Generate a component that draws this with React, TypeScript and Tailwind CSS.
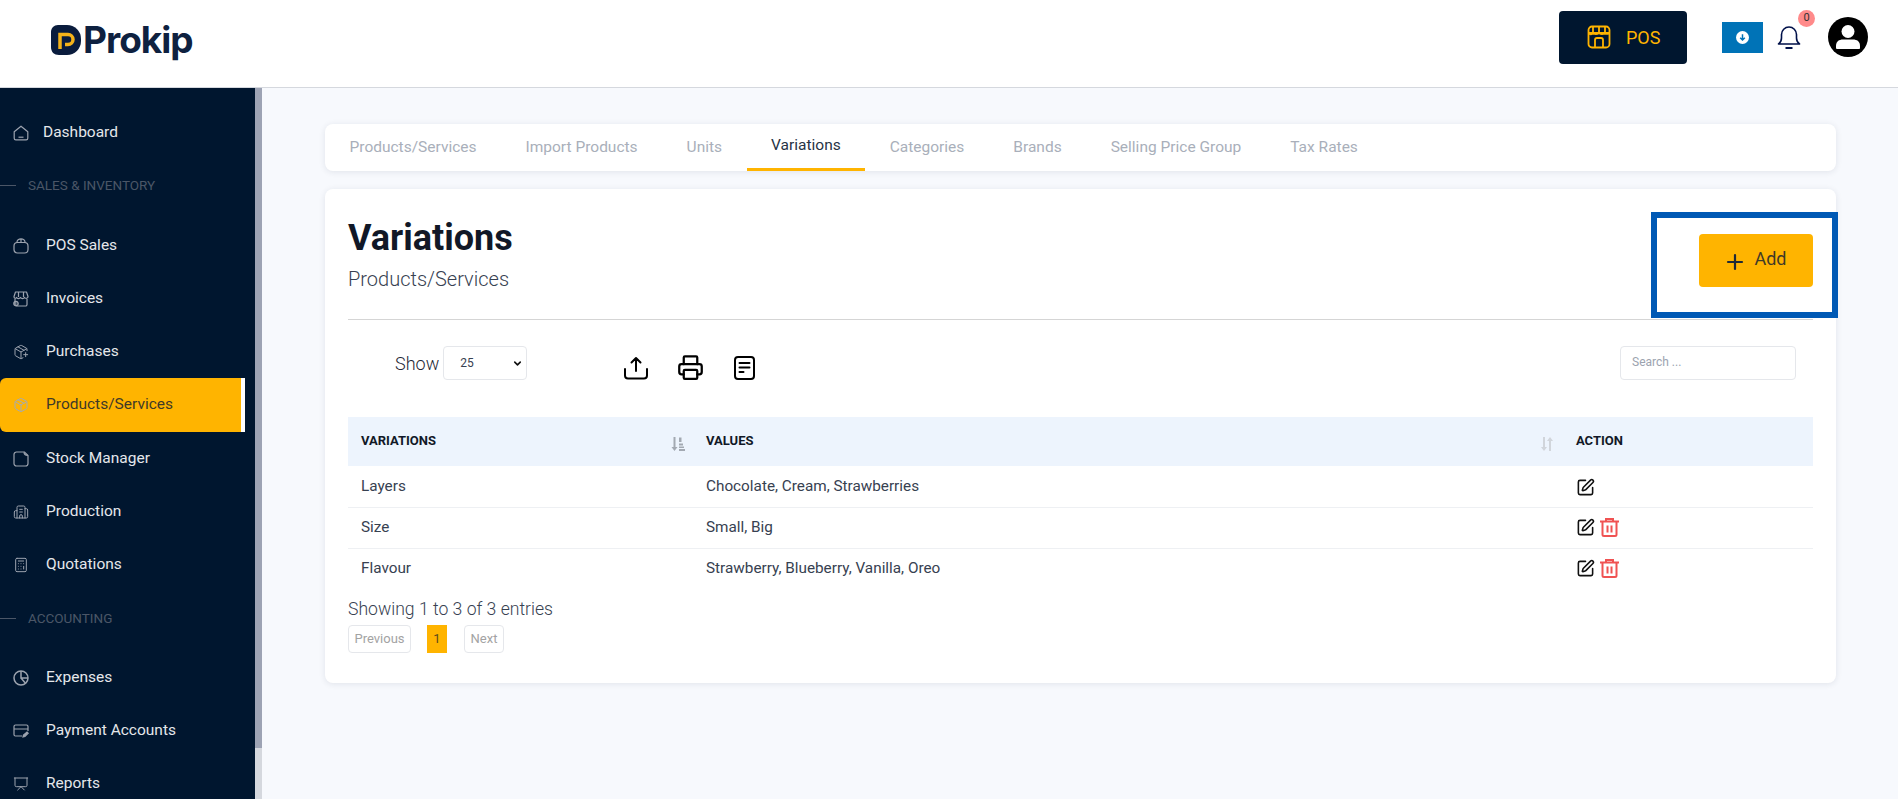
import {
  Building2,
  Calculator,
  ChevronDown,
  Package,
  PackagePlus,
  Plus,
  Presentation,
  Printer,
  SquarePen,
} from "lucide-react";
import type { ReactNode } from "react";

type IconProps = { className?: string; strokeWidth?: number };

const HomeIcon = ({ className }: IconProps) => (
  <svg viewBox="0 0 16 16" fill="none" stroke="currentColor" strokeWidth="1.2" className={className}>
    <path d="M1.2 6.8 8 1.2l6.8 5.6v6.4c0 1-.7 1.6-1.6 1.6H2.8c-.9 0-1.6-.6-1.6-1.6z" strokeLinejoin="round" />
    <path d="M5.5 12.2h5" />
  </svg>
);

const BagIcon = ({ className }: IconProps) => (
  <svg viewBox="0 0 16 16" fill="none" stroke="currentColor" strokeWidth="1.2" className={className}>
    <rect x="1" y="4.5" width="14" height="10.5" rx="3.5" />
    <path d="M4 5V4a4 3.2 0 0 1 8 0v1M8 1v3.5" />
  </svg>
);

const StoreIcon = ({ className }: IconProps) => (
  <svg viewBox="0 0 16 16" fill="none" stroke="currentColor" strokeWidth="1.2" className={className}>
    <path d="M2.5 1h11l1.5 4.5c0 2-2.4 2.4-3.5 1-1 1.4-3 1.4-4 0-1 1.4-3.2 1.4-4 0-1.100 1.400-2.500 1-2.500-1z" strokeLinejoin="round" />
    <path d="M2 8v5.500A1.500 1.500 0 0 0 3.500 15h9a1.500 1.500 0 0 0 1.500-1.500V8M5.500 1v5M10.500 1v5" />
    <circle cx="3" cy="12.500" r="2.200" fill="currentColor" fillOpacity="0.4" />
  </svg>
);

const NoteIcon = ({ className }: IconProps) => (
  <svg viewBox="0 0 16 16" fill="none" stroke="currentColor" strokeWidth="1.2" className={className}>
    <path d="M3.500 1h8l3.500 3.500V12.500a2.500 2.500 0 0 1-2.500 2.500h-9A2.500 2.500 0 0 1 1 12.500v-9A2.500 2.500 0 0 1 3.500 1z" />
    <path d="M11 1.200c0 1.800.8 3 3.800 3.200" />
  </svg>
);

const PieIcon = ({ className }: IconProps) => (
  <svg viewBox="0 0 16 16" fill="none" stroke="currentColor" strokeWidth="1.500" className={className}>
    <circle cx="8" cy="8" r="7" />
    <path d="M8 1v7h7M8 8l4.500 5.200" />
  </svg>
);

const CardPenIcon = ({ className }: IconProps) => (
  <svg viewBox="0 0 16 16" fill="none" stroke="currentColor" strokeWidth="1.200" className={className}>
    <path d="M9 13H2.500A1.500 1.500 0 0 1 1 11.500v-8A1.500 1.500 0 0 1 2.500 2h11A1.500 1.500 0 0 1 15 3.500V8M1 6h14" />
    <path d="m10 14 .5-2 3.500-3 1.200 1.300-3.300 3.200z" fill="currentColor" />
  </svg>
);

const NAV_TOP = [
  { label: "POS Sales", icon: BagIcon },
  { label: "Invoices", icon: StoreIcon },
  { label: "Purchases", icon: PackagePlus },
  { label: "Products/Services", icon: Package, active: true },
  { label: "Stock Manager", icon: NoteIcon },
  { label: "Production", icon: Building2 },
  { label: "Quotations", icon: Calculator },
];

const NAV_ACCOUNTING = [
  { label: "Expenses", icon: PieIcon },
  { label: "Payment Accounts", icon: CardPenIcon },
  { label: "Reports", icon: Presentation },
];

const TABS = [
  "Products/Services",
  "Import Products",
  "Units",
  "Variations",
  "Categories",
  "Brands",
  "Selling Price Group",
  "Tax Rates",
];

const ROWS = [
  { name: "Layers", values: "Chocolate, Cream, Strawberries", canDelete: false },
  { name: "Size", values: "Small, Big", canDelete: true },
  { name: "Flavour", values: "Strawberry, Blueberry, Vanilla, Oreo", canDelete: true },
];

const NavItem = ({
  label,
  icon: Icon,
  active,
}: {
  label: string;
  icon: (props: IconProps) => ReactNode;
  active?: boolean;
}) => (
  <div
    className={
      active
        ? "flex h-[54px] w-[245px] shrink-0 items-center rounded-l-md border-r-[4px] border-white bg-[#ffb400] pl-[13px] text-[#3f3a28]"
        : "flex h-[53px] shrink-0 items-center pl-[13px] text-[#e5e7eb]"
    }
  >
    <Icon strokeWidth={1.5} className={active ? "h-4 w-4 text-[#a6abb0]" : "h-4 w-4 text-[#9ca3af]"} />
    <span className="ml-[17px] text-[15.500px]">{label}</span>
  </div>
);

const SectionLabel = ({ label }: { label: string }) => (
  <div className="flex h-[30px] items-center gap-[12px] text-[13.500px] text-[#4b5667]">
    <div className="h-px w-4 bg-[#4b5667]" />
    <span>{label}</span>
  </div>
);

const Sidebar = () => (
  <div className="flex w-[262px] shrink-0 overflow-hidden">
    <aside className="flex w-[255px] flex-col overflow-hidden bg-[#00162f] pt-[18px]">
      <div className="flex h-[53px] shrink-0 items-center pl-[13px] text-[#e5e7eb]">
        <HomeIcon className="h-4 w-4 text-[#9ca3af]" />
        <span className="ml-[14px] text-[15.500px]">Dashboard</span>
      </div>
      <div className="mt-[11px]">
        <SectionLabel label="SALES & INVENTORY" />
      </div>
      <div className="mt-[19px] flex flex-col">
        {NAV_TOP.map((item) => (
          <NavItem key={item.label} {...item} />
        ))}
      </div>
      <div className="mt-[12px]">
        <SectionLabel label="ACCOUNTING" />
      </div>
      <div className="mt-[18px] flex flex-col">
        {NAV_ACCOUNTING.map((item) => (
          <NavItem key={item.label} {...item} />
        ))}
      </div>
    </aside>
    <div className="flex w-[7px] flex-col bg-[#d5d8de]">
      <div className="h-[660px] bg-[#9da3b4]" />
    </div>
  </div>
);

const Header = () => (
  <header className="flex h-[88px] shrink-0 items-center justify-between border-b border-[#d5d8de] bg-white pr-[30px] pb-[13px] pl-[51px]">
    <div className="mt-[5px] flex items-center gap-[2px]">
      <svg viewBox="0 0 30 30" className="h-[30px] w-[30px]">
        <path d="M7 0h9a14 14 0 0 1 14 14v2a14 14 0 0 1-14 14H8c-5 0-8-3-8-8V7c0-4 3-7 7-7z" fill="#0a1c3d" />
        <path d="M9 24V9.500h8a5 5 0 0 1 0 10h-3" fill="none" stroke="#f5b31a" strokeWidth="3.500" />
      </svg>
      <span className="font-['Inter',sans-serif] text-[37px] leading-none font-bold tracking-[-1px] text-[#0e2140]">
        Prokip
      </span>
    </div>
    <div className="flex items-center">
      <button className="flex h-[53px] w-[128px] items-center rounded bg-[#00162f] pl-[28px] text-[18px] text-[#ffb400]">
        <svg viewBox="0 0 24 24" fill="none" stroke="currentColor" strokeWidth="1.800" className="h-6 w-6">
          <rect x="1.500" y="1.500" width="21" height="21" rx="3.500" />
          <path d="M2 8h20M6 2v5.500c0 2-4 2.500-4 .5M12 2v5.500c0 2-6 2-6 0M18 2v5.500c0 2-6 2-6 0M18 7.500c0 2 4 1.500 4 .5M8 22v-7a2 2 0 0 1 2-2h4a2 2 0 0 1 2 2v7" />
        </svg>
        <span className="ml-[15px]">POS</span>
      </button>
      <div className="ml-[35px] flex h-[31px] w-[41px] items-center justify-center bg-[#0073b7]">
        <svg viewBox="0 0 14 14" className="h-[13px] w-[13px]">
          <circle cx="7" cy="7" r="7" fill="#fff" />
          <path d="M7 3.500v6M4.500 7.200 7 9.700l2.500-2.500" fill="none" stroke="#0073b7" strokeWidth="1.600" />
        </svg>
      </div>
      <div className="relative ml-[14px] h-6 w-6">
        <svg viewBox="0 0 24 24" fill="none" stroke="#00114a" strokeWidth="1.600" className="h-6 w-6">
          <path d="M1.500 19c2-1.500 3-3 3-6V9.500a7.500 7.500 0 0 1 15 0V13c0 3 1 4.500 3 6z" strokeLinejoin="round" />
          <path d="M8.500 23h7" strokeWidth="2" />
        </svg>
        <span className="absolute -top-[15px] left-[21px] flex h-[17px] w-[17px] items-center justify-center rounded-full bg-[#ff8a8a] text-[11px] text-[#333]">
          0
        </span>
      </div>
      <svg viewBox="0 0 40 40" className="ml-[27px] h-10 w-10">
        <circle cx="20" cy="20" r="20" fill="#000" />
        <circle cx="20" cy="14.500" r="6.500" fill="#fff" />
        <path d="M8 31v-2c0-4.500 3-6.500 7-6.500h10c4 0 7 2 7 6.500v2c0 .8-.5 1-1.500 1h-21c-1 0-1.500-.2-1.500-1z" fill="#fff" />
      </svg>
    </div>
  </header>
);

const SortDownIcon = () => (
  <svg viewBox="0 0 14 16" className="h-4 w-[14px] text-[#a3a9b2]" fill="currentColor">
    <path d="M2.500 1h2v10h2L3.500 15 .5 11h2z" />
    <path d="M8 1.500h2.500V6H8zM8 7.500h4v2H8zM8 10.500h5v1.500H8zM8 13h6v2H8z" />
  </svg>
);

const SortBothIcon = () => (
  <svg viewBox="0 0 14 16" className="h-4 w-[14px] text-[#d1d5db]" fill="currentColor">
    <path d="M3 1h2v10h2l-3 4-3-4h2zM9 15h2V5h2l-3-4-3 4h2z" />
  </svg>
);

const TrashIcon = () => (
  <svg viewBox="0 0 19 19" fill="none" stroke="#f05252" strokeWidth="2" className="h-[19px] w-[19px]">
    <path d="M0 3.500h19M6 3.500V1h7v2.500M2.500 3.500V16.500A1.500 1.500 0 0 0 4 18h11a1.500 1.500 0 0 0 1.500-1.500V3.500M7.500 7.500v7M11.500 7.500v7" />
  </svg>
);

const Toolbar = () => (
  <div className="mt-[26px] flex h-[36px] items-start justify-between pr-[17px] pl-[47px]">
    <div className="flex items-start">
      <label className="flex items-center gap-1 text-[18px] font-light text-[#1f2937]">
        Show
        <div className="relative">
          <select className="h-[34px] w-[84px] appearance-none rounded border border-[#e5e7eb] bg-white pl-4 text-[12px] font-normal text-[#374151] outline-none">
            <option>25</option>
          </select>
          <ChevronDown strokeWidth={3.500} className="absolute top-[12px] right-[4px] h-[11px] w-[11px] text-[#111]" />
        </div>
      </label>
      <div className="mt-[8px] ml-[97px] flex items-center text-black">
        <svg viewBox="0 0 24 24" fill="none" stroke="currentColor" strokeWidth="2" strokeLinecap="round" className="h-6 w-6">
          <path d="M12 15V2M7.500 6.500 12 2l4.500 4.500M1 13v6.500A3 3 0 0 0 4 22.500h16a3 3 0 0 0 3-3V13" strokeLinejoin="round" />
        </svg>
        <Printer strokeWidth={2} className="ml-[29px] h-[27px] w-[27px]" />
        <svg viewBox="0 0 21 24" fill="none" stroke="currentColor" strokeWidth="2" strokeLinecap="round" className="ml-[30px] h-6 w-[21px]">
          <rect x="1" y="1" width="19" height="22" rx="3" />
          <path d="M5.500 7h10M5.500 11.500h10M5.500 16h4" />
        </svg>
      </div>
    </div>
    <input
      placeholder="Search ..."
      className="h-[34px] w-[176px] rounded border border-[#e5e7eb] bg-white pb-[2px] pl-[11px] text-[12px] outline-none placeholder:text-[#9ca3af]"
    />
  </div>
);

const VariationsTable = () => (
  <table className="mt-[35px] w-full table-fixed border-collapse text-[15.300px] text-[#374151]">
    <colgroup>
      <col className="w-[345px]" />
      <col className="w-[870px]" />
      <col />
    </colgroup>
    <thead>
      <tr className="h-[49px] bg-[#edf4fd] text-left text-[13px] font-bold text-[#111827]">
        <th className="pb-[2px] pl-[13px]">
          <div className="flex items-center justify-between pr-2">
            VARIATIONS
            <span className="mt-[7px]">
              <SortDownIcon />
            </span>
          </div>
        </th>
        <th className="pb-[2px] pl-[13px]">
          <div className="flex items-center justify-between pr-[9px]">
            VALUES
            <span className="mt-[7px]">
              <SortBothIcon />
            </span>
          </div>
        </th>
        <th className="pb-[2px] pl-[13px]">ACTION</th>
      </tr>
    </thead>
    <tbody>
      {ROWS.map((row, i) => (
        <tr key={row.name} className={i < 2 ? "h-[41px] border-b border-[#eef0f3]" : "h-[41px]"}>
          <td className="pl-[13px]">{row.name}</td>
          <td className="pl-[13px]">{row.values}</td>
          <td className="pl-[13px]">
            <div className={i === 0 ? "mt-[3px] flex items-center gap-[5px]" : "flex items-center gap-[5px]"}>
              <SquarePen strokeWidth={2} className="h-[19px] w-[19px] text-[#111]" />
              {row.canDelete && <TrashIcon />}
            </div>
          </td>
        </tr>
      ))}
    </tbody>
  </table>
);

const Pagination = () => (
  <div className="mt-[3px] flex h-[28px] items-stretch text-[13px] text-[#a3a3a3]">
    <button className="w-[63px] rounded-sm border border-[#e5e7eb]">Previous</button>
    <button className="ml-4 w-[20px] bg-[#ffb400] text-[#5a4a1c]">1</button>
    <button className="ml-[17px] w-[40px] rounded-sm border border-[#e5e7eb]">Next</button>
  </div>
);

const App = () => {
  return (
    <div className="flex h-[799px] flex-col overflow-hidden bg-[#f7f9fd] font-['Roboto',sans-serif]">
      <Header />
      <div className="flex min-h-0 flex-1">
        <Sidebar />
        <main className="w-[1636px] shrink-0 pt-[36px] pr-[62px] pl-[63px]">
          <nav className="flex h-[47px] rounded-lg bg-white text-[15.500px] text-[#a9afba] shadow-[0_1px_6px_rgba(30,40,70,0.1)]">
            {TABS.map((tab) =>
              tab === "Variations" ? (
                <div key={tab} className="flex items-center border-b-[3px] border-[#ffb400] px-[24.500px] text-[#263345]">
                  {tab}
                </div>
              ) : (
                <div key={tab} className="flex items-center px-[24.500px]">
                  {tab}
                </div>
              ),
            )}
          </nav>
          <section className="relative mt-[18px] h-[494px] rounded-lg bg-white px-[23px] shadow-[0_1px_6px_rgba(30,40,70,0.1)]">
            <div className="flex h-[131px] items-start justify-between border-b border-[#d5d5d5]">
              <div className="pt-[27px]">
                <h1 className="text-[36px] leading-[44px] font-bold text-[#111827]">Variations</h1>
                <p className="mt-[5px] text-[20px] leading-[28px] font-light text-[#374151]">Products/Services</p>
              </div>
              <button className="mt-[45px] flex h-[53px] w-[114px] items-center justify-center gap-[7px] rounded bg-[#ffb400] pr-[2px] text-[18px] text-[#3f3a28]">
                <Plus strokeWidth={2.200} className="mt-[3px] h-[24px] w-[24px] text-[#1f2937]" />
                <span className="-mt-1">Add</span>
              </button>
            </div>
            {/* highlight drawn over the add button */}
            <div className="pointer-events-none absolute top-[23px] right-[-2px] h-[106px] w-[187px] border-[6px] border-[#0059b5]" />
            <Toolbar />
            <VariationsTable />
            <p className="mt-[7px] text-[17.600px] leading-[26px] font-light text-[#374151]">Showing 1 to 3 of 3 entries</p>
            <Pagination />
          </section>
        </main>
      </div>
    </div>
  );
};

export default App;
